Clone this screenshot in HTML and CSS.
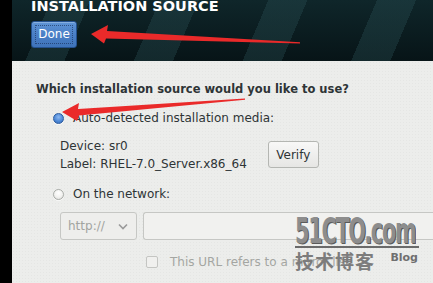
FILE: index.html
```html
<!DOCTYPE html>
<html>
<head>
<meta charset="utf-8">
<link rel="stylesheet" href="styles.css">
</head>
<body>
<div class="screen">
  <div class="rail"></div>
  <div class="main">
    <header class="header">
      <h1 class="title">INSTALLATION SOURCE</h1>
      <button class="done"><span class="focus">Done</span></button>
    </header>
    <section class="content">
      <h2 class="question">Which installation source would you like to use?</h2>
      <div class="option">
        <span class="radio checked"></span>
        <span class="label">Auto-detected installation media:</span>
      </div>
      <div class="media">
        <div class="info">
          <div>Device: sr0</div>
          <div>Label: RHEL-7.0_Server.x86_64</div>
        </div>
        <button class="verify">Verify</button>
      </div>
      <div class="option net">
        <span class="radio"></span>
        <span class="label">On the network:</span>
      </div>
      <div class="netrow">
        <div class="proto"><span>http://</span>
          <svg class="chev" width="10" height="7" viewBox="0 0 10 7"><path d="M1 1.5 L5 5.5 L9 1.5" fill="none" stroke="#9a9a9a" stroke-width="1.6"/></svg>
        </div>
        <div class="url"></div>
      </div>
      <div class="check">
        <span class="box"></span>
        <span class="ctext">This URL refers to a mirror list.</span>
      </div>
    </section>
  </div>
  <div class="watermark">
    <div class="wm-big"><span class="wm-text">51CTO.com</span></div>
    <div class="wm-row"><span class="wm-cn">技术博客</span><span class="wm-blog">Blog</span></div>
  </div>
  <svg class="arrows" width="433" height="283" viewBox="0 0 433 283">
    <polygon points="91,34 108,25 107,31 300,42.2 300,43.6 106,38.5 104,43.5" fill="#ea2a2a"/>
    <polygon points="62,112 79,103 78,109 245,98.4 245,99.8 79,115.5 77,121" fill="#ea2a2a"/>
  </svg>
</div>
</body>
</html>
```
FILE: styles.css
```css
html, body {
  margin: 0;
  padding: 0;
}
body {
  width: 433px;
  height: 283px;
  overflow: hidden;
  background: #000;
  font-family: "DejaVu Sans", sans-serif;
}
.screen {
  position: relative;
  display: flex;
  width: 433px;
  height: 283px;
  overflow: hidden;
}
.rail {
  width: 12px;
  flex: none;
  background: #000;
}
.main {
  flex: 1;
  display: flex;
  flex-direction: column;
  min-width: 0;
}
.header {
  height: 61px;
  flex: none;
  padding-left: 19px;
  box-sizing: border-box;
  background-color: #0b1d21;
  background-image:
    repeating-linear-gradient(113deg,
      rgba(0,0,0,0) 0px, rgba(0,0,0,0) 36px,
      rgba(45,85,90,0.32) 36px, rgba(45,85,90,0.32) 72px,
      rgba(0,0,0,0) 72px, rgba(0,0,0,0) 100px),
    linear-gradient(180deg, #0f262a 0%, #071417 100%);
}
.title {
  margin: -2px 0 0 0;
  font-size: 14.5px;
  line-height: 17px;
  font-weight: bold;
  color: #fff;
  letter-spacing: 0;
  white-space: nowrap;
}
.done {
  margin-top: 6px;
  width: 46px;
  height: 27px;
  padding: 3px;
  border: 1px solid #24518f;
  border-radius: 3px;
  background: linear-gradient(180deg, #5f95d6 0%, #4a7fc6 50%, #3f74bb 100%);
  box-shadow: inset 0 1px 0 rgba(255,255,255,0.25);
  box-sizing: border-box;
  display: flex;
  font-family: "DejaVu Sans", sans-serif;
}
.done .focus {
  flex: 1;
  border: 1px dotted rgba(20,40,80,0.6);
  color: #fff;
  font-size: 12px;
  line-height: 17px;
  text-align: center;
}
.content {
  flex: 1;
  background-color: #ecedeb;
  background-image: radial-gradient(rgba(0,0,0,0.03) 0.6px, transparent 0.8px);
  background-size: 3px 3px;
  padding: 20px 0 0 24px;
  color: #2e3436;
  font-size: 12px;
}
.question {
  margin: 0;
  font-size: 11.5px;
  line-height: 16px;
  font-weight: bold;
  color: #2e3436;
}
.option {
  display: flex;
  align-items: center;
  gap: 9px;
  margin: 13px 0 0 17px;
  line-height: 16px;
}
.radio {
  width: 11px;
  height: 11px;
  border-radius: 50%;
  box-sizing: border-box;
  border: 1px solid #a9aca8;
  background: radial-gradient(circle at 50% 35%, #ffffff 0%, #f3f3f1 50%, #dcdcd9 100%);
  box-shadow: 0 1px 0 rgba(255,255,255,0.6);
}
.radio.checked {
  border: 1px solid #2c5c9f;
  background: radial-gradient(circle at 50% 35%, #8cb8f0 0%, #4f8ad8 55%, #2f67b5 100%);
}
.media {
  display: flex;
  align-items: flex-start;
  margin: 12px 0 0 24px;
  gap: 21px;
}
.info {
  display: flex;
  flex-direction: column;
  gap: 2px;
  line-height: 16px;
  color: #2e3436;
}
.verify {
  margin-top: 3px;
  width: 51px;
  height: 27px;
  border: 1px solid #b4b6b2;
  border-radius: 3px;
  background: linear-gradient(180deg, #f8f8f7 0%, #e6e6e4 100%);
  color: #2e3436;
  font-family: "DejaVu Sans", sans-serif;
  font-size: 12px;
  padding: 0;
}
.option.net {
  margin-top: 14px;
}
.netrow {
  display: flex;
  gap: 6px;
  margin: 10px 0 0 24px;
}
.proto {
  width: 77px;
  height: 28px;
  box-sizing: border-box;
  border: 1px solid #c6c7c4;
  border-radius: 3px;
  display: flex;
  align-items: center;
  justify-content: space-between;
  padding: 0 8px 0 7px;
  color: #a2a4a0;
  font-size: 12px;
  background: #eeeeec;
}
.url {
  flex: 1;
  height: 28px;
  box-sizing: border-box;
  border: 1px solid #c6c7c4;
  border-right: none;
  border-radius: 3px 0 0 3px;
  background: #f1f1ef;
}
.check {
  display: flex;
  align-items: center;
  gap: 12px;
  margin: 14px 0 0 110px;
  line-height: 16px;
  color: #a4a6a2;
  white-space: nowrap;
}
.box {
  width: 10px;
  height: 10px;
  flex: none;
  border: 1px solid #c4c5c2;
  border-radius: 2px;
  background: #f0f0ee;
}
.ctext {
  font-size: 12px;
}
.watermark {
  position: absolute;
  left: 295px;
  top: 216px;
  width: 124px;
  color: #8a8a8a;
}
.wm-big {
  width: 124px;
  height: 30px;
  border-bottom: 2px solid #6a6a6a;
  overflow: visible;
}
.wm-text {
  display: inline-block;
  font-family: "DejaVu Sans Condensed", "DejaVu Sans", sans-serif;
  font-weight: bold;
  font-size: 23px;
  line-height: 20px;
  letter-spacing: -1.2px;
  transform: scale(1, 1.55);
  transform-origin: top left;
  color: #8d8d8d;
  text-shadow: 1px 1px 0 #5a5a5a;
  white-space: nowrap;
  margin-top: -1px;
}
.wm-row {
  display: flex;
  align-items: flex-start;
  justify-content: space-between;
  margin-top: 1px;
}
.wm-cn {
  font-family: "Noto Sans CJK SC", sans-serif;
  font-weight: bold;
  font-size: 19px;
  line-height: 24px;
  color: #7c7c7c;
  letter-spacing: 1px;
}
.wm-blog {
  font-family: "DejaVu Sans", sans-serif;
  font-weight: bold;
  font-size: 11px;
  line-height: 12px;
  color: #6f6f6f;
  margin-top: 3px;
  margin-right: 1px;
}
.arrows {
  position: absolute;
  left: 0;
  top: 0;
  pointer-events: none;
}
```
